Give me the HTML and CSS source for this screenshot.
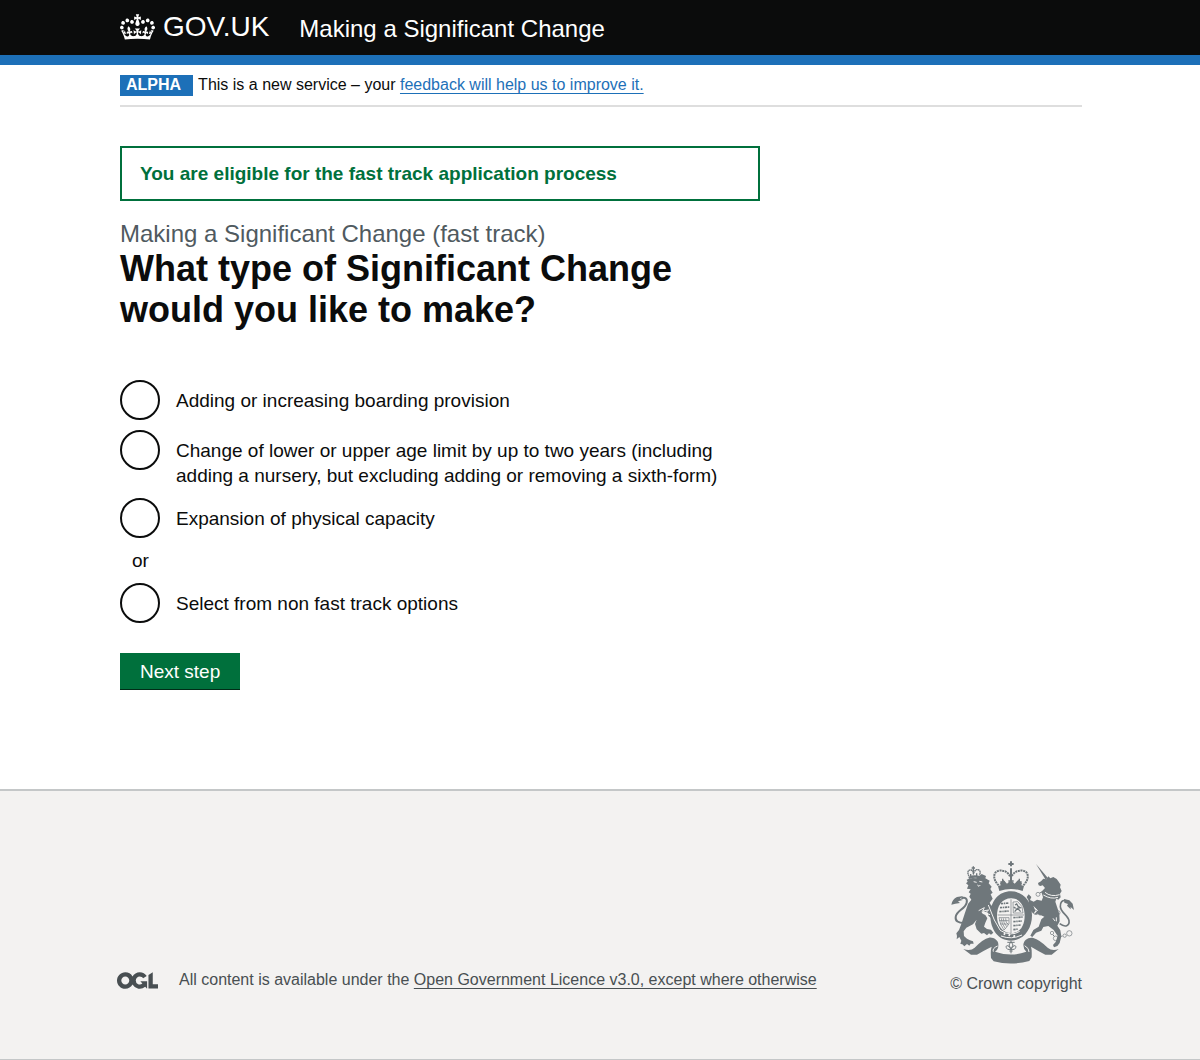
FILE: index.html
```html
<!DOCTYPE html>
<html lang="en">
<head>
<meta charset="utf-8">
<meta name="viewport" content="width=device-width, initial-scale=1">
<title>What type of Significant Change would you like to make? - GOV.UK</title>
<link rel="stylesheet" href="styles.css">
</head>
<body>
<header class="header">
  <div class="container header-inner">
    <a class="logo" href="#">
      <svg class="crown" viewBox="0 0 132 97" aria-hidden="true"><path fill="currentColor" fill-rule="evenodd" d="M25 30.2c3.5 1.5 7.7-.2 9.1-3.7 1.5-3.6-.2-7.8-3.9-9.2-3.6-1.4-7.6.3-9.1 3.9-1.4 3.5.3 7.5 3.9 9zM9 39.5c3.6 1.5 7.8-.2 9.2-3.7 1.5-3.6-.2-7.8-3.9-9.1-3.6-1.5-7.6.2-9.1 3.8-1.4 3.5.3 7.5 3.8 9zM4.4 57.2c3.5 1.5 7.7-.2 9.1-3.8 1.5-3.6-.2-7.7-3.9-9.1-3.5-1.5-7.6.3-9.1 3.8-1.4 3.5.3 7.6 3.9 9.1zm38.3-21.4c3.5 1.5 7.7-.2 9.1-3.8 1.5-3.6-.2-7.7-3.9-9.1-3.6-1.5-7.6.3-9.1 3.8-1.3 3.6.4 7.7 3.9 9.1zm64.4-5.6c-3.6 1.5-7.8-.2-9.1-3.7-1.5-3.6.2-7.8 3.8-9.2 3.6-1.4 7.7.3 9.2 3.9 1.3 3.5-.4 7.5-3.9 9zm15.9 9.3c-3.6 1.5-7.7-.2-9.1-3.7-1.5-3.6.2-7.8 3.7-9.1 3.6-1.5 7.7.2 9.2 3.8 1.5 3.5-.3 7.5-3.8 9zm4.7 17.7c-3.6 1.5-7.8-.2-9.2-3.8-1.5-3.6.2-7.7 3.9-9.1 3.6-1.5 7.7.3 9.2 3.8 1.3 3.5-.4 7.6-3.9 9.1zM89.3 35.8c-3.6 1.5-7.8-.2-9.2-3.8-1.4-3.6.2-7.7 3.9-9.1 3.6-1.5 7.7.3 9.2 3.8 1.4 3.6-.3 7.7-3.9 9.1zM69.7 17.7l8.9 4.7V9.3l-8.9 2.8c-.2-.3-.5-.6-.9-.9L72.4 0H59.6l3.5 11.2c-.3.3-.6.5-.9.9l-8.8-2.8v13.1l8.8-4.7c.3.3.6.7.9.9l-5 15.4v.1c-.2.8-.4 1.6-.4 2.4 0 4.1 3.1 7.5 7 8.1h.2c.3 0 .7.1 1 .1.4 0 .7 0 1-.1h.2c4-.6 7.1-4.1 7.1-8.1 0-.8-.1-1.7-.4-2.4V34l-5.1-15.4c.4-.2.7-.6 1-.9zM66 92.8c16.9 0 32.8 1.1 47.1 3.2 4-16.9 8.9-26.7 14-33.5l-9.6-3.4c1 4.9 1.1 7.2 0 10.2-1.5-1.4-3-4.3-4.2-8.7L108.6 76c2.8-2 5-3.2 7.5-3.3-4.4 9.4-10 11.9-13.6 11.2-4.3-.8-6.3-4.6-5.6-7.9 1-4.7 5.7-5.9 8-.5 4.3-8.7-3-11.4-7.6-8.8 7.1-7.2 7.9-13.5 2.1-21.1-8 6.1-8.1 12.3-4.5 20.8-4.7-5.4-12.1-2.5-9.5 6.2 3.4-5.2 7.9-2 7.2 3.1-.6 4.3-6.4 7.8-13.5 7.2-10.3-.9-10.9-8-11.2-13.8 2.5-.5 7.1 1.8 11 7.3L80.2 60c-4.1 4.4-8 5.3-12.3 5.4 1.4-4.4 8-11.6 8-11.6H55.5s6.4 7.2 7.9 11.6c-4.2-.1-8-1-12.3-5.4l1.4 16.4c3.9-5.5 8.5-7.7 10.9-7.3-.3 5.8-.9 12.8-11.1 13.8-7.2.6-12.9-2.9-13.5-7.2-.7-5 3.8-8.3 7.1-3.1 2.7-8.7-4.6-11.6-9.4-6.2 3.7-8.5 3.6-14.7-4.6-20.8-5.8 7.6-5 13.9 2.2 21.1-4.7-2.6-11.9.1-7.7 8.8 2.3-5.5 7.1-4.2 8.1.5.7 3.3-1.3 7.1-5.7 7.9-3.5.7-9-1.8-13.5-11.2 2.5.1 4.7 1.3 7.5 3.3l-4.7-15.4c-1.2 4.4-2.7 7.2-4.3 8.7-1.1-3-.9-5.3 0-10.2l-9.5 3.4c5 6.9 9.9 16.7 14 33.5 14.8-2.1 30.8-3.2 47.7-3.2z"/></svg>
      <span>GOV.UK</span>
    </a>
    <a class="service-name" href="#">Making a Significant Change</a>
  </div>
</header>

<div class="container">
  <div class="phase-banner">
    <strong class="phase-tag">ALPHA</strong>
    <span>This is a new service – your <a class="link" href="#">feedback will help us to improve it.</a></span>
  </div>

  <main class="main">
    <p class="notice">You are eligible for the fast track application process</p>
    <form>
      <fieldset class="fieldset">
        <legend class="legend">
          <span class="caption">Making a Significant Change (fast track)</span>
          <h1 class="title">What type of Significant Change would you like to make?</h1>
        </legend>
        <div class="radios">
          <div class="radio-row">
            <input class="radio" type="radio" name="change" id="boarding" value="boarding">
            <label class="radio-label" for="boarding">Adding or increasing boarding provision</label>
          </div>
          <div class="radio-row">
            <input class="radio" type="radio" name="change" id="age" value="age">
            <label class="radio-label" for="age">Change of lower or upper age limit by up to two years (including adding a nursery, but excluding adding or removing a sixth-form)</label>
          </div>
          <div class="radio-row">
            <input class="radio" type="radio" name="change" id="capacity" value="capacity">
            <label class="radio-label" for="capacity">Expansion of physical capacity</label>
          </div>
          <div class="divider">or</div>
          <div class="radio-row">
            <input class="radio" type="radio" name="change" id="other" value="other">
            <label class="radio-label" for="other">Select from non fast track options</label>
          </div>
        </div>
      </fieldset>
      <button class="button" type="button">Next step</button>
    </form>
  </main>
</div>

<footer class="footer">
  <div class="container footer-inner">
    <div class="licence">
      <svg class="ogl" viewBox="0 0 483.2 195.7" aria-hidden="true"><path fill="currentColor" d="M421.5 142.8V.1l-50.7 32.3v161.1h112.4v-50.7zm-122.3-9.6A47.12 47.12 0 0 1 221 97.8c0-26 21.1-47.1 47.1-47.1 16.7 0 31.4 8.7 39.7 21.8l42.7-27.2A97.63 97.63 0 0 0 268.1 0c-36.5 0-68.3 20.1-85.1 49.7A98 98 0 0 0 97.8 0C43.9 0 0 43.9 0 97.8s43.9 97.8 97.8 97.8c36.5 0 68.3-20.1 85.1-49.7a97.76 97.76 0 0 0 149.6 25.4l19.4 22.2h3v-87.8h-80l24.3 27.5zM97.8 145c-26 0-47.1-21.1-47.1-47.1s21.1-47.1 47.1-47.1 47.1 21.1 47.1 47.1S123.8 145 97.8 145"/></svg>
      <span>All content is available under the <a class="footer-link" href="#">Open Government Licence v3.0, except where otherwise</a></span>
    </div>
    <a class="copyright" href="#">
      <svg class="crest" viewBox="28 32 375 309" aria-hidden="true">
        <g class="crest-line">
          <!-- crown on the shield -->
          <path stroke-width="6" stroke-dasharray="6 2" d="M174 105C156 88 156 65 175 61C192 59 203 67 208 78M248 105C266 88 266 65 247 61C230 59 218 67 213 78"/>
          <path stroke-width="6" d="M211 33V48M203 41H219M211 54V104"/>
          <path stroke-width="4" d="M186 85V103M179 95H193M236 85V103M229 95H243M203 92H219"/>
          <!-- crown on the lion -->
          <path stroke-width="4" stroke-dasharray="5 1" d="M85 77C78 66 83 57 91 59Q97 61 99 68Q102 60 108 58C117 57 122 65 116 74"/>
          <path stroke-width="4" d="M98 48V72M93 53H103M90 71V78M108 69V77"/>
          <!-- tails -->
          <path stroke-width="6" d="M71 218Q43 218 45 200C47 181 73 177 78 157C81 145 72 138 62 145"/>
          <path stroke-width="5" d="M357 220C374 233 387 226 385 211C382 194 360 187 359 169C358 155 366 149 374 151"/>
          <!-- chain -->
          <circle cx="292" cy="132" r="6"/><circle cx="286" cy="186" r="7"/><circle cx="352" cy="187" r="6"/><circle cx="334" cy="248" r="5"/><circle cx="345" cy="264" r="7"/><circle cx="372" cy="256" r="5"/><circle cx="386" cy="249" r="8"/><path d="M352 261L366 257"/>
          <path stroke-width="3" d="M297 128L306 124M292 190L299 195M337 254L341 258"/>
        </g>
        <g class="crest-fill">
          <path d="M172 107Q211 93 250 107L246 122Q211 110 176 122Z"/>
          <path d="M178 99L188 88L199 100L211 89L222 100L233 88L244 99L241 107Q211 97 181 107Z"/>
          <path d="M83 79Q99 72 118 77L118 84Q101 80 85 86Z"/>
          <!-- lion -->
          <path d="M78 88Q91 80 107 84L123 71L136 77L134 84L147 91L144 99L153 109L149 116L156 127L150 132L156 145L147 157L151 165L162 172L157 179L160 187L157 195L163 206L155 207L143 196L142 187L128 182L122 184L126 190L134 194L140 204L134 217L130 229L139 236L151 238L158 247L151 253L145 249L139 255L130 248L122 250L108 237L103 221L108 208L97 222L77 232L69 243L70 257L79 265L88 270L97 273L99 280L90 280L86 286L79 281L71 288L65 282L59 281L62 271L56 260L48 267L49 257L47 249L55 239L63 218L72 190L82 161L92 148L86 139L90 130L84 126L90 117L79 115L83 105L76 99L81 94Z"/>
          <path d="M32 163Q35 146 49 140L68 137L58 145L66 149L52 153L58 158L44 160Z"/>
          <!-- unicorn -->
          <path d="M286 41L321 82L315 88Z"/>
          <path d="M292 98L301 93L308 85L317 87L323 78L329 84L338 80L348 86L353 93L360 103L358 111L363 122L358 130L360 141L353 148L347 145L344 154L349 169L356 191L357 213L350 226L359 240L362 258L357 278L350 287L340 291L337 284L345 275L351 257L339 239L323 227L308 230L302 241L286 247L275 260L269 256L278 239L294 229L302 207L311 199L291 190L281 192L291 180L278 166L284 181L278 190L269 180L263 149L258 140L264 132L272 140L268 149L279 154L289 148L303 151L307 141L302 124L313 113L306 105L299 107L294 105Z"/>
          <path d="M370 146L386 150L396 160L400 179L390 170L390 177L379 166L382 161L371 157Z"/>
          <!-- ribbon -->
          <path d="M68 296Q90 303 102 292Q128 265 145 262C158 260 174 270 173 283Q174 297 163 304Q211 321 257 304Q248 296 248 284C249 269 263 260 278 263Q296 268 321 292Q335 304 354 296L333 313H314Q291 301 271 289Q274 297 273 321L266 332Q211 347 159 333L151 323Q149 300 153 289Q127 302 109 313H91Z"/>
          <!-- garter -->
          <path fill-rule="evenodd" d="M211 123C248 123 274 153 274 195S248 271 211 271S149 239 149 195S175 123 211 123ZM212 144C183 144 169 168 169 197S185 248 212 248S252 225 252 196S238 144 212 144Z"/>
        </g>
        <g class="crest-cut">
          <path d="M313 126Q331 141 357 133M308 134Q331 148 352 141"/>
          <path d="M99 94L108 96M116 93L125 95M110 104L115 108L119 104"/>
          <path d="M114 181L131 172L126 182L144 179L134 188L148 193M143 164L161 209L178 239"/>
          <path d="M181 257Q212 269 244 254M178 240Q211 260 237 243M158 304Q154 294 171 287M265 305Q266 294 252 286"/>
          <path stroke-width="7" stroke-dasharray="5 10" d="M189 250L224 258"/>
          <path d="M347 201V213M337 204L343 212M291 181L283 173"/>
        </g>
        <g class="crest-line">
          <!-- arms -->
          <path stroke-width="2" d="M211 147V248M171 194H250"/>
          <path stroke-width="5" stroke-dasharray="7 2 4 2" d="M181 160L205 158M178 172L207 170M176 184L206 182M218 202L247 200M218 214L244 212M218 226L240 224M218 238L232 236"/>
          <path stroke-width="2" d="M175 202H205V220Q198 232 190 239Q178 224 175 202M182 204Q182 220 194 235M188 204Q188 218 198 229M195 204Q194 218 203 222M175 211H204M179 221H203"/>
          <path stroke-width="2" d="M217 155L231 154L244 169L247 188H218Z"/>
          <path stroke-width="4" d="M223 164L228 161L232 168L239 172L231 174L240 184M231 173L222 184M225 174L219 170"/>
          <!-- fleur-de-lis pendant -->
          <path stroke-width="3" d="M211 273L205 284L211 297L217 284ZM209 293C199 279 191 289 201 297H221C231 289 223 279 213 293M211 297V309M206 302H216M200 276H222"/>
        </g>
      </svg>
      <span>© Crown copyright</span>
    </a>
  </div>
</footer>
</body>
</html>
```
FILE: styles.css
```css
* {
  box-sizing: border-box;
}

body {
  margin: 0;
  background: #fff;
  color: #0b0c0c;
  font-family: "Liberation Sans", Arial, Helvetica, sans-serif;
  font-size: 19px;
  line-height: 25px;
}

.container {
  max-width: 964px;
  margin: 0 auto;
  padding-left: 2px;
}

.header {
  background: #0b0c0c;
  border-bottom: 10px solid #1d70b8;
}

.header-inner {
  display: flex;
  align-items: center;
  gap: 30px;
  min-height: 55px;
  padding-bottom: 2px;
}

.logo {
  display: flex;
  align-items: center;
  gap: 8px;
  color: #fff;
  font-size: 28px;
  line-height: 30px;
  text-decoration: none;
}

.crown {
  width: 35px;
  height: 26px;
}

.service-name {
  padding-top: 4px;
  color: #fff;
  font-size: 24px;
  line-height: 30px;
  text-decoration: none;
}

.phase-banner {
  display: flex;
  align-items: flex-start;
  gap: 5px;
  padding: 10px 0 9px;
  border-bottom: 2px solid #dedede;
  font-size: 16px;
  line-height: 19px;
}

.phase-tag {
  padding: 0 12px 2px 6px;
  background: #1d70b8;
  color: #fff;
}

.link {
  color: #1d70b8;
  text-underline-offset: 3px;
}

.main {
  max-width: 640px;
  padding: 39px 0 99px;
}

.notice {
  margin: 0 0 20px;
  padding: 13px 18px;
  border: 2px solid #00703c;
  color: #00703c;
  font-weight: bold;
}

.fieldset {
  min-width: 0;
  margin: 0 0 30px;
  padding: 0;
  border: 0;
}

.legend {
  padding: 0 0 50px;
}

.caption {
  display: block;
  padding-bottom: 2px;
  color: #505a5f;
  font-size: 24px;
  line-height: 25px;
}

.title {
  margin: 0;
  font-size: 36px;
  line-height: 41px;
}

.radios {
  display: flex;
  flex-direction: column;
  gap: 10px;
}

.radio-row {
  display: flex;
  align-items: flex-start;
  gap: 16px;
}

.radio {
  flex: none;
  width: 40px;
  height: 40px;
  margin: 0;
  border: 2px solid #0b0c0c;
  border-radius: 50%;
  background: #fff;
  appearance: none;
}

.radio:checked {
  background: radial-gradient(#0b0c0c 10px, #fff 11px);
}

.radio-label {
  padding: 8px 0 0;
}

.divider {
  padding-left: 12px;
}

.button {
  display: block;
  padding: 6px 20px 5px;
  border: 0;
  border-bottom: 1px solid #002d18;
  background: #00703c;
  color: #fff;
  font: inherit;
}

.footer {
  padding: 70px 0 65px;
  border-top: 2px solid #c4c7c8;
  border-bottom: 1px solid #c4c7c8;
  background: #f3f2f1;
  color: #484f52;
  font-size: 16px;
  line-height: 20px;
}

.footer-inner {
  display: flex;
  align-items: flex-end;
  justify-content: space-between;
}

.licence {
  display: flex;
  align-items: center;
  gap: 21px;
  margin-left: -3px;
  padding-bottom: 4px;
}

.ogl {
  flex: none;
  width: 41px;
  height: 17px;
}

.footer-link {
  color: inherit;
  text-underline-offset: 3px;
}

.copyright {
  display: flex;
  flex-direction: column;
  gap: 10px;
  color: inherit;
  text-decoration: none;
}

.crest {
  width: 125px;
  height: 103px;
}

.crest-line {
  fill: none;
  stroke: #6f777b;
  stroke-width: 2;
}

.crest-fill {
  fill: #6f777b;
}

.crest-cut {
  fill: none;
  stroke: #f3f2f1;
  stroke-width: 3;
}
```
